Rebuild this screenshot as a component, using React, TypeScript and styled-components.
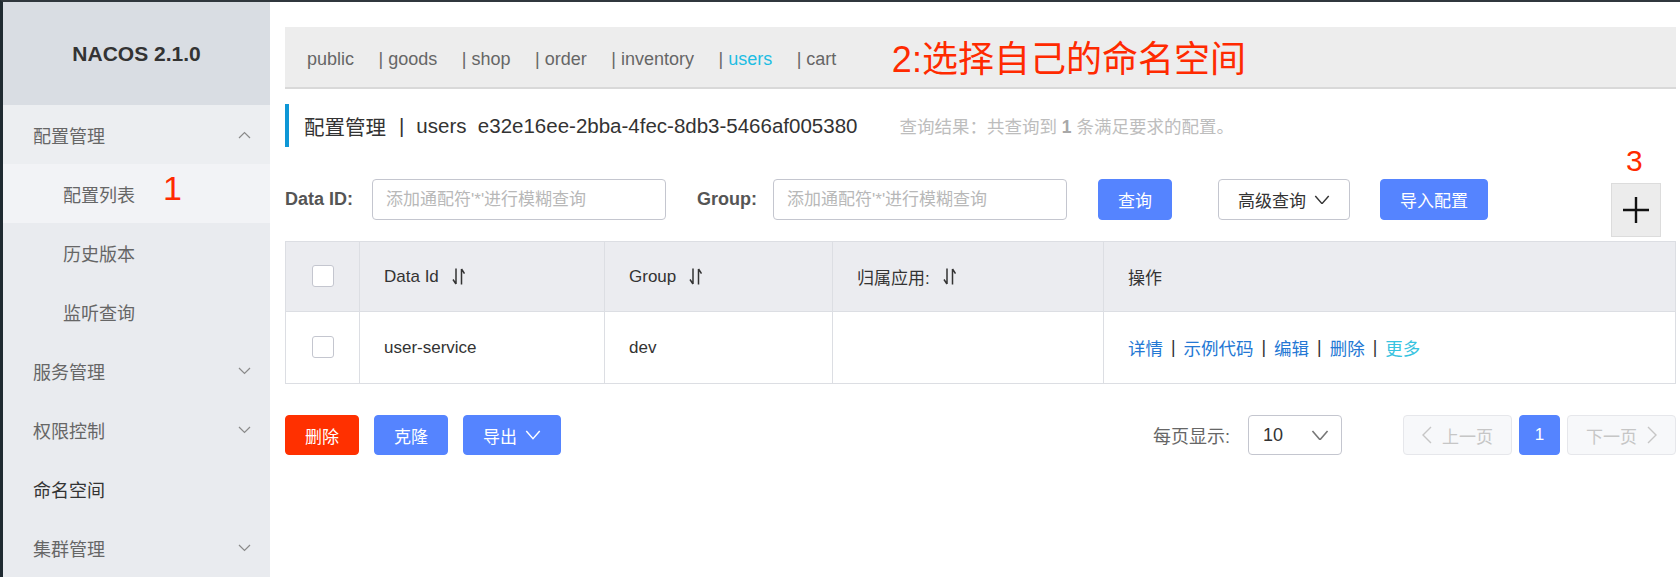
import React from 'react';
import styled, { createGlobalStyle } from 'styled-components';

const GlobalStyle = createGlobalStyle`
  html, body { margin: 0; padding: 0; background: #fff; }
  body {
    font-family: "Liberation Sans", "Noto Sans CJK SC", sans-serif;
    color: #333;
  }
  * { box-sizing: border-box; }
`;

const Page = styled.div`
  display: flex;
  width: 1680px;
  height: 577px;
  border-top: 2px solid #30373d;
  border-left: 3px solid #1f2a31;
  overflow: hidden;
`;

const Sidebar = styled.aside`
  width: 267px;
  flex-shrink: 0;
  background: #e9ebef;
  display: flex;
  flex-direction: column;
`;

const Brand = styled.div`
  height: 103px;
  display: flex;
  align-items: center;
  justify-content: center;
  background: #d9dde3;
  font-weight: 700;
  font-size: 21px;
  color: #333;
`;

const MenuItem = styled.div<{ $sub?: boolean; $active?: boolean; $open?: boolean; $strong?: boolean }>`
  position: relative;
  height: 59px;
  flex-shrink: 0;
  display: flex;
  align-items: center;
  justify-content: space-between;
  padding: 0 19px 0 ${p => (p.$sub ? '60px' : '30px')};
  font-size: 18px;
  color: ${p => (p.$strong ? '#333' : '#666')};
  background: ${p => (p.$active ? '#f2f3f6' : p.$open ? '#eceef1' : 'transparent')};
`;

const Chevron = styled.svg`
  width: 13px;
  height: 8px;
  color: #8a8a8a;
`;

const RedNote = styled.span<{ $size: number }>`
  color: #ff2a00;
  font-size: ${p => p.$size}px;
  line-height: 1;
  font-family: "Liberation Sans", "Noto Sans CJK SC", sans-serif;
`;

const SideNote = styled(RedNote)`
  position: absolute;
  left: 160px;
  top: 7px;
`;

const Main = styled.main`
  flex: 1;
  min-width: 0;
  padding: 25px 4px 0 15px;
  display: flex;
  flex-direction: column;
`;

const NamespaceBar = styled.div`
  height: 62px;
  flex-shrink: 0;
  background: #ededed;
  border-bottom: 2px solid #d9d9d9;
  display: flex;
  align-items: center;
  padding: 5px 0 0 22px;
  font-size: 18px;
  color: #666;
`;

const NsItem = styled.span`
  margin-right: 24.5px;
  white-space: pre;
`;

const NsName = styled.span<{ $active?: boolean }>`
  color: ${p => (p.$active ? '#1fbde3' : '#666')};
`;

const BarNote = styled(RedNote)`
  margin-left: 31px;
`;

const TitleRow = styled.div`
  margin-top: 15px;
  height: 43px;
  flex-shrink: 0;
  border-left: 4px solid #0e97d6;
  padding-left: 15px;
  display: flex;
  align-items: center;
  font-size: 20.5px;
  color: #333;
  white-space: pre;
`;

const TitleSep = styled.span`
  margin: 0 12px 0 13px;
`;

const Subtitle = styled.span`
  margin-left: 42px;
  font-size: 17.5px;
  color: #bdbdbd;
  b { color: #a8a8a8; }
`;

const SearchRow = styled.div`
  margin-top: 32px;
  display: flex;
  align-items: flex-start;
  flex-shrink: 0;
`;

const Label = styled.label<{ $gapLeft?: number; $gapRight?: number }>`
  font-weight: 700;
  font-size: 18px;
  color: #555;
  line-height: 41px;
  margin-left: ${p => p.$gapLeft ?? 0}px;
  margin-right: ${p => p.$gapRight ?? 19}px;
`;

const TextInput = styled.input`
  width: 294px;
  height: 41px;
  border: 1px solid #c4c6cf;
  border-radius: 4px;
  padding: 0 13px;
  font-size: 17px;
  font-family: inherit;
  color: #333;
  outline: none;
  &::placeholder { color: #b8b8b8; }
`;

const Button = styled.button<{ $kind?: 'primary' | 'normal' | 'danger'; $gapLeft?: number }>`
  height: 41px;
  padding: 0 19px;
  margin-left: ${p => p.$gapLeft ?? 0}px;
  border-radius: 4px;
  font-size: 17px;
  font-family: inherit;
  display: inline-flex;
  align-items: center;
  gap: 8px;
  cursor: pointer;
  border: 1px solid ${p => (p.$kind === 'normal' ? '#c4c6cf' : p.$kind === 'danger' ? '#ff3000' : '#5584ff')};
  background: ${p => (p.$kind === 'normal' ? '#fff' : p.$kind === 'danger' ? '#ff3000' : '#5584ff')};
  color: ${p => (p.$kind === 'normal' ? '#333' : '#fff')};
`;

const PlusButton = styled.button`
  position: relative;
  margin: 4px 15px 0 auto;
  width: 50px;
  height: 54px;
  background: #ececec;
  border: 1px solid #dcdcdc;
  display: flex;
  align-items: center;
  justify-content: center;
  padding: 0;
`;

const PlusNote = styled(RedNote)`
  position: absolute;
  left: 14px;
  top: -38px;
`;

const Table = styled.div`
  margin-top: 4px;
  border: 1px solid #dcdee3;
  border-bottom: none;
  flex-shrink: 0;
`;

const Row = styled.div<{ $head?: boolean }>`
  display: grid;
  grid-template-columns: 74px 245px 228px 271px 1fr;
  height: ${p => (p.$head ? '70px' : '72px')};
  background: ${p => (p.$head ? '#ebecf0' : '#fff')};
  border-bottom: 1px solid #dcdee3;
`;

const Cell = styled.div<{ $center?: boolean }>`
  display: flex;
  align-items: center;
  justify-content: ${p => (p.$center ? 'center' : 'flex-start')};
  padding-left: ${p => (p.$center ? '0' : '24px')};
  border-right: 1px solid #dcdee3;
  font-size: 17px;
  color: #333;
  &:last-child { border-right: none; }
`;

const Check = styled.span`
  width: 22px;
  height: 22px;
  margin-top: -2px;
  border: 1px solid #c4c6cf;
  border-radius: 3px;
  background: #fff;
`;

const SortIcon = styled.svg`
  width: 13px;
  height: 19px;
  margin-left: 13px;
  color: #333;
`;

const Links = styled.div`
  display: flex;
  align-items: center;
  font-size: 17.5px;
`;

const Link = styled.a<{ $light?: boolean }>`
  color: ${p => (p.$light ? '#37c3e0' : '#2478d4')};
  text-decoration: none;
`;

const Sep = styled.span`
  color: #333;
  margin: 0 8px;
`;

const BottomRow = styled.div`
  margin-top: 31px;
  display: flex;
  align-items: center;
  flex-shrink: 0;
`;

const BottomButton = styled(Button)`
  height: 40px;
`;

const PageSizeLabel = styled.span`
  margin-left: auto;
  font-size: 18px;
  color: #666;
`;

const SelectBox = styled.div`
  margin-left: 18px;
  width: 94px;
  height: 40px;
  border: 1px solid #c4c6cf;
  border-radius: 4px;
  display: flex;
  align-items: center;
  justify-content: space-between;
  padding: 0 12px 0 14px;
  font-size: 18px;
  color: #333;
`;

const Pager = styled.div`
  margin-left: 61px;
  display: flex;
  gap: 7px;
`;

const PageBtn = styled.div<{ $active?: boolean; $w: number }>`
  width: ${p => p.$w}px;
  height: 40px;
  border-radius: 4px;
  display: flex;
  align-items: center;
  justify-content: center;
  gap: 10px;
  font-size: 17px;
  border: 1px solid ${p => (p.$active ? '#5584ff' : '#e6e7eb')};
  background: ${p => (p.$active ? '#5584ff' : '#f7f8fa')};
  color: ${p => (p.$active ? '#fff' : '#c6c6c6')};
`;

const DownIcon = ({ size = 16, color = 'currentColor' }: { size?: number; color?: string }) => (
  <svg width={size} height={size * 0.6} viewBox="0 0 16 10" fill="none">
    <polyline points="1,1 8,9 15,1" stroke={color} strokeWidth="1.5" />
  </svg>
);

const ArrowIcon = ({ dir }: { dir: 'left' | 'right' }) => (
  <svg width="10" height="18" viewBox="0 0 10 18" fill="none">
    <polyline points={dir === 'left' ? '9,1 1,9 9,17' : '1,1 9,9 1,17'} stroke="currentColor" strokeWidth="1.4" />
  </svg>
);

const Sort = () => (
  <SortIcon viewBox="0 0 13 19" fill="none">
    <path d="M4 1.5v15.5M4 17L1 12.5M9.5 17.5V2M9.5 2l3 4.5" stroke="currentColor" strokeWidth="1.5" />
  </SortIcon>
);

const MenuChevron = ({ up }: { up?: boolean }) => (
  <Chevron viewBox="0 0 13 8" fill="none">
    <polyline points={up ? '1,7 6.5,1.5 12,7' : '1,1 6.5,6.5 12,1'} stroke="currentColor" strokeWidth="1.2" />
  </Chevron>
);

const namespaces = ['public', 'goods', 'shop', 'order', 'inventory', 'users', 'cart'];

export default function App() {
  return (
    <>
      <GlobalStyle />
      <Page>
        <Sidebar>
          <Brand>NACOS 2.1.0</Brand>
          <MenuItem $open>
            配置管理
            <MenuChevron up />
          </MenuItem>
          <MenuItem $sub $active>
            配置列表
            <SideNote $size={34}>1</SideNote>
          </MenuItem>
          <MenuItem $sub>历史版本</MenuItem>
          <MenuItem $sub>监听查询</MenuItem>
          <MenuItem>
            服务管理
            <MenuChevron />
          </MenuItem>
          <MenuItem>
            权限控制
            <MenuChevron />
          </MenuItem>
          <MenuItem $strong>命名空间</MenuItem>
          <MenuItem>
            集群管理
            <MenuChevron />
          </MenuItem>
        </Sidebar>

        <Main>
          <NamespaceBar>
            {namespaces.map((n, i) => (
              <NsItem key={n}>
                {i > 0 ? '| ' : ''}
                <NsName $active={n === 'users'}>{n}</NsName>
              </NsItem>
            ))}
            <BarNote $size={36}>2:选择自己的命名空间</BarNote>
          </NamespaceBar>

          <TitleRow>
            <span>配置管理</span>
            <TitleSep>|</TitleSep>
            <span>users  e32e16ee-2bba-4fec-8db3-5466af005380</span>
            <Subtitle>
              查询结果：共查询到 <b>1</b> 条满足要求的配置。
            </Subtitle>
          </TitleRow>

          <SearchRow>
            <Label>Data ID:</Label>
            <TextInput placeholder="添加通配符'*'进行模糊查询" />
            <Label $gapLeft={31} $gapRight={16}>Group:</Label>
            <TextInput placeholder="添加通配符'*'进行模糊查询" />
            <Button $kind="primary" $gapLeft={31}>查询</Button>
            <Button $kind="normal" $gapLeft={46}>
              高级查询
              <DownIcon />
            </Button>
            <Button $kind="primary" $gapLeft={30}>导入配置</Button>
            <PlusButton>
              <PlusNote $size={30}>3</PlusNote>
              <svg width="30" height="30" viewBox="0 0 30 30" fill="none">
                <path d="M15 2v26M2 15h26" stroke="#111" strokeWidth="2.4" />
              </svg>
            </PlusButton>
          </SearchRow>

          <Table>
            <Row $head>
              <Cell $center>
                <Check />
              </Cell>
              <Cell>
                Data Id
                <Sort />
              </Cell>
              <Cell>
                Group
                <Sort />
              </Cell>
              <Cell>
                归属应用:
                <Sort />
              </Cell>
              <Cell>操作</Cell>
            </Row>
            <Row>
              <Cell $center>
                <Check />
              </Cell>
              <Cell>user-service</Cell>
              <Cell>dev</Cell>
              <Cell />
              <Cell>
                <Links>
                  <Link>详情</Link>
                  <Sep>|</Sep>
                  <Link>示例代码</Link>
                  <Sep>|</Sep>
                  <Link>编辑</Link>
                  <Sep>|</Sep>
                  <Link>删除</Link>
                  <Sep>|</Sep>
                  <Link $light>更多</Link>
                </Links>
              </Cell>
            </Row>
          </Table>

          <BottomRow>
            <BottomButton $kind="danger">删除</BottomButton>
            <BottomButton $kind="primary" $gapLeft={15}>克隆</BottomButton>
            <BottomButton $kind="primary" $gapLeft={15}>
              导出
              <DownIcon />
            </BottomButton>
            <PageSizeLabel>每页显示:</PageSizeLabel>
            <SelectBox>
              10
              <DownIcon size={18} color="#777" />
            </SelectBox>
            <Pager>
              <PageBtn $w={109}>
                <ArrowIcon dir="left" />
                上一页
              </PageBtn>
              <PageBtn $w={41} $active>
                1
              </PageBtn>
              <PageBtn $w={109}>
                下一页
                <ArrowIcon dir="right" />
              </PageBtn>
            </Pager>
          </BottomRow>
        </Main>
      </Page>
    </>
  );
}
